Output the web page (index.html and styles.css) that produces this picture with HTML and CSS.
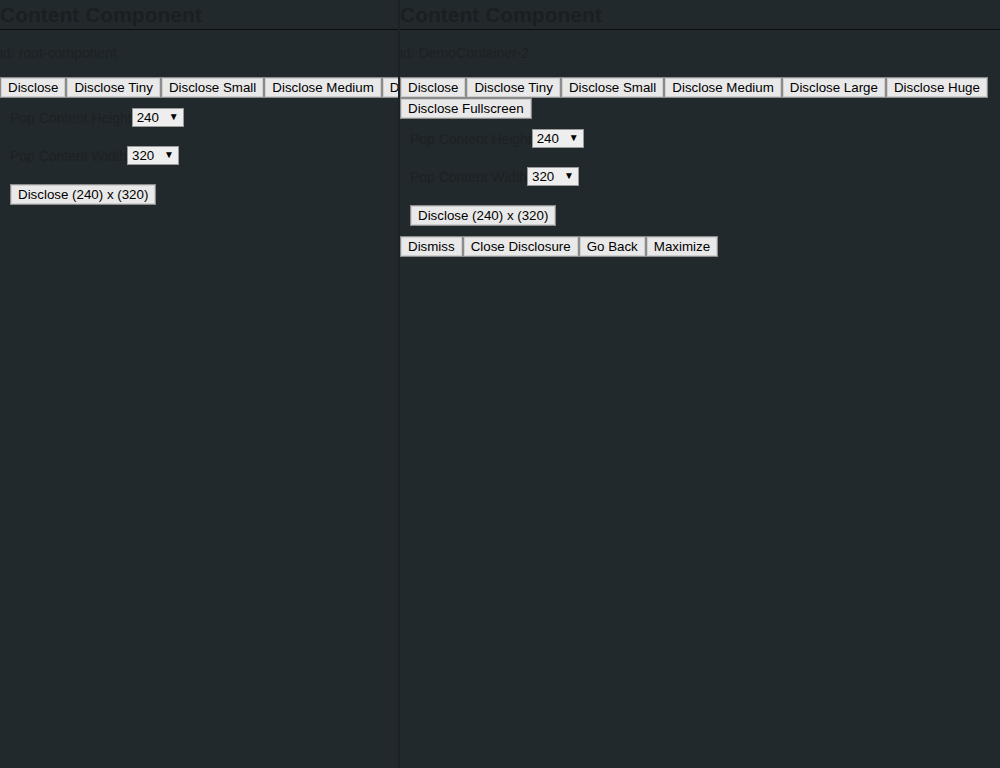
FILE: index.html
```html
<!DOCTYPE html>
<html lang="en">
<head>
<meta charset="utf-8">
<title>Content Component</title>
<link rel="stylesheet" href="styles.css">
</head>
<body>
<div class="app">
  <section class="pane pane-left">
    <h2 class="title">Content Component</h2>
    <p class="ident">id: root-component</p>
    <div class="btn-row nowrap">
      <button class="btn">Disclose</button><button class="btn">Disclose Tiny</button><button class="btn">Disclose Small</button><button class="btn">Disclose Medium</button><button class="btn">Disclose Large</button>
    </div>
    <div class="form">
      <div class="form-row">
        <label class="lbl">Pop Content Height</label><span class="sel-wrap"><select class="sel"><option>240</option></select></span>
      </div>
      <div class="form-row">
        <label class="lbl">Pop Content Width</label><span class="sel-wrap"><select class="sel"><option>320</option></select></span>
      </div>
      <div class="form-row">
        <button class="btn">Disclose (240) x (320)</button>
      </div>
    </div>
  </section>
  <section class="pane pane-right">
    <h2 class="title">Content Component</h2>
    <p class="ident">id: DemoContainer-2</p>
    <div class="btn-row">
      <button class="btn">Disclose</button><button class="btn">Disclose Tiny</button><button class="btn">Disclose Small</button><button class="btn">Disclose Medium</button><button class="btn">Disclose Large</button><button class="btn">Disclose Huge</button><button class="btn">Disclose Fullscreen</button>
    </div>
    <div class="form">
      <div class="form-row">
        <label class="lbl">Pop Content Height</label><span class="sel-wrap"><select class="sel"><option>240</option></select></span>
      </div>
      <div class="form-row">
        <label class="lbl">Pop Content Width</label><span class="sel-wrap"><select class="sel"><option>320</option></select></span>
      </div>
      <div class="form-row">
        <button class="btn">Disclose (240) x (320)</button>
      </div>
    </div>
    <div class="btn-row">
      <button class="btn">Dismiss</button><button class="btn">Close Disclosure</button><button class="btn">Go Back</button><button class="btn">Maximize</button>
    </div>
  </section>
</div>
</body>
</html>
```

FILE: styles.css
```css
html, body {
  margin: 0;
  padding: 0;
  height: 100%;
}
body {
  background: #22292c;
  font-family: "Liberation Sans", Arial, sans-serif;
  font-size: 14px;
  color: #1b2124;
  overflow: hidden;
}
.app {
  display: flex;
  height: 768px;
}
.pane {
  overflow: hidden;
  min-width: 0;
}
.pane-left {
  flex: none;
  width: 398px;
  border-right: 2px solid #1c2225;
}
.pane-right {
  flex: 1;
}
.title {
  margin: 0;
  padding-top: 3px;
  height: 26px;
  font-size: 21px;
  line-height: 24px;
  font-weight: bold;
  color: #1a1f22;
  white-space: nowrap;
  border-bottom: 1px solid #0b0d0e;
}
.ident {
  margin: 15px 0 16px;
  line-height: 16px;
  font-size: 14px;
  color: #1b2124;
  white-space: nowrap;
}
.btn-row {
  display: flex;
  flex-wrap: wrap;
}
.btn-row.nowrap {
  flex-wrap: nowrap;
}
.btn {
  flex: none;
  margin: 0;
  height: 21px;
  padding: 2px 7px;
  font-family: "Liberation Sans", Arial, sans-serif;
  font-size: 13.33px;
  line-height: 15px;
  color: #000;
  background: #e9e9e9;
  border: 1px solid #8c8c8c;
  box-shadow: inset 0 0 0 1px #cfcfcf;
  border-radius: 0;
  white-space: nowrap;
}
.form {
  padding: 10px;
  display: flex;
  flex-direction: column;
  align-items: flex-start;
  gap: 19px;
}
.form-row {
  display: flex;
  align-items: center;
  min-height: 19px;
}
.lbl {
  font-size: 14px;
  line-height: 16px;
  color: #1b2124;
  white-space: nowrap;
  letter-spacing: -0.03px;
}
.sel-wrap {
  position: relative;
  display: inline-block;
}
.sel {
  appearance: none;
  -webkit-appearance: none;
  display: block;
  width: 52px;
  height: 19px;
  margin: 0;
  padding: 0 0 0 4px;
  font-family: "Liberation Sans", Arial, sans-serif;
  font-size: 13.33px;
  line-height: 17px;
  color: #000;
  background: #eeeeee;
  border: 1px solid #9a9a9a;
  border-radius: 0;
}
.sel-wrap::after {
  content: "\25BC";
  position: absolute;
  right: 5px;
  top: 3px;
  font-size: 10px;
  line-height: 11px;
  color: #000;
  pointer-events: none;
}
```
